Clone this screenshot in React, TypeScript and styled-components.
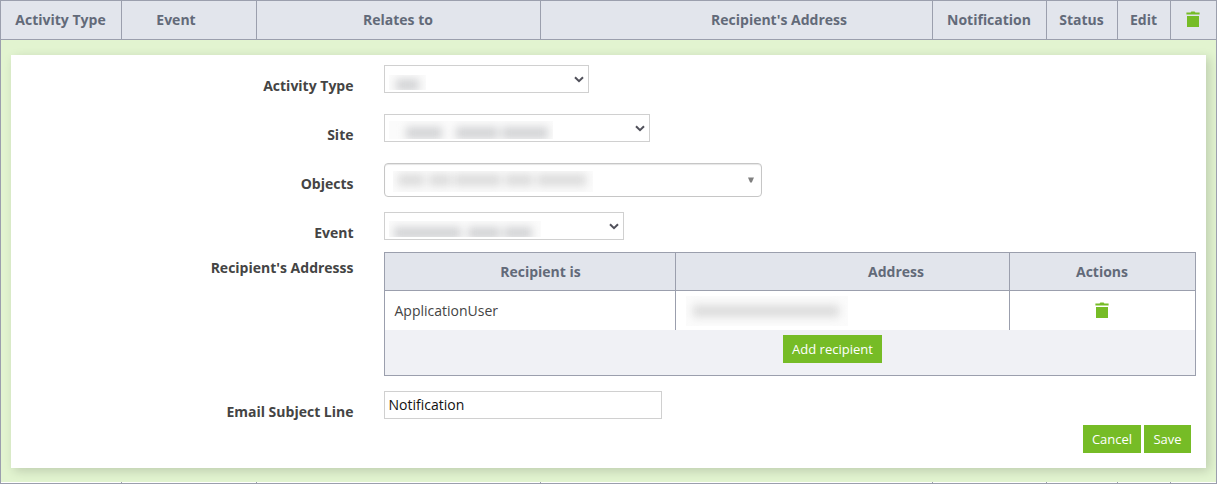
import React from 'react';
import styled, { createGlobalStyle } from 'styled-components';

const LINE = '#9b9fad';
const HEAD = '#e2e5ec';
const GREEN = '#76bc26';

const GlobalStyle = createGlobalStyle`
  * { box-sizing: border-box; }
  body { margin: 0; background: #fff; font-family: "Open Sans", sans-serif; font-size: 14px; color: #444; overflow: hidden; }
`;

const Page = styled.div`
  width: 1217px;
  height: 484px;
  border: 1px solid ${LINE};
  display: flex;
  flex-direction: column;
`;

const ColumnRow = styled.div<{ $height: number; $header?: boolean }>`
  display: grid;
  grid-template-columns: 121px 135px 284px 392px 114px 71px 53px 45px;
  height: ${p => p.$height}px;
  flex: none;
  background: ${p => (p.$header ? HEAD : '#fff')};
  border-bottom: ${p => (p.$header ? `1px solid ${LINE}` : 'none')};
`;

const HeadCell = styled.div<{ $left?: number; $right?: number; $bottom?: number }>`
  display: flex;
  align-items: center;
  justify-content: center;
  padding: 0 ${p => p.$right ?? 0}px ${p => p.$bottom ?? 0}px ${p => p.$left ?? 0}px;
  border-right: 1px solid ${LINE};
  color: #626a79;
  font-weight: 700;
  white-space: nowrap;
  &:last-child { border-right: none; }
`;

const Editor = styled.div`
  flex: 1;
  background: #e2f4d0;
  padding: 15px 10px 14px;
  display: flex;
  overflow: hidden;
`;

const Panel = styled.form`
  flex: 1;
  background: #fff;
  box-shadow: 3px 3px 10px rgba(0, 0, 0, 0.16);
  padding: 10px 10px 0 0;
  display: flex;
  flex-direction: column;
`;

const Field = styled.div<{ $gap: number; $labelTop: number }>`
  display: grid;
  grid-template-columns: 342.5px 1fr;
  column-gap: 30.5px;
  align-items: start;
  margin-bottom: ${p => p.$gap}px;
  > label {
    text-align: right;
    font-weight: 700;
    line-height: 20px;
    height: 0;
    padding-top: ${p => p.$labelTop}px;
  }
`;

const Select = styled.div<{ $width: number }>`
  width: ${p => p.$width}px;
  height: 28px;
  border: 1px solid #d0d0d0;
  display: flex;
  align-items: flex-start;
  justify-content: space-between;
  padding: 0 4px;
  > svg { margin-top: 10px; flex: none; }
`;

const ObjectPicker = styled.div`
  width: 378px;
  height: 34px;
  border: 1px solid #c6c6c6;
  border-radius: 4px;
  box-shadow: inset 0 1px 1px rgba(0, 0, 0, 0.1);
  display: flex;
  align-items: flex-start;
  justify-content: space-between;
  padding: 0 7px 0 8px;
  > svg { margin-top: 13px; }
`;

const Redacted = styled.div<{ $width: number; $height: number; $top: number }>`
  width: ${p => p.$width}px;
  height: ${p => p.$height}px;
  margin-top: ${p => p.$top}px;
  overflow: hidden;
  background: #fbfbfb;
`;

const RedactedWords = styled.div<{ $top: number }>`
  display: flex;
  padding-top: ${p => p.$top}px;
  filter: blur(4px);
`;

const RedactedWord = styled.span<{ $gap: number; $width: number; $tone?: string }>`
  flex: none;
  width: ${p => p.$width}px;
  height: 12px;
  margin-left: ${p => p.$gap}px;
  background: ${p => p.$tone ?? '#d2d3d5'};
`;

const Recipients = styled.div`
  width: 812px;
  height: 124px;
  border: 1px solid ${LINE};
  display: flex;
  flex-direction: column;
`;

const RecipientRow = styled.div<{ $header?: boolean }>`
  display: grid;
  grid-template-columns: 291px 334px 185px;
  height: ${p => (p.$header ? 38 : 39)}px;
  background: ${p => (p.$header ? HEAD : '#fff')};
  border-bottom: ${p => (p.$header ? `1px solid ${LINE}` : 'none')};
`;

const RecipientCell = styled.div<{ $center?: boolean }>`
  border-right: 1px solid ${LINE};
  display: flex;
  align-items: center;
  justify-content: ${p => (p.$center ? 'center' : 'flex-start')};
  padding: ${p => (p.$center ? '0 1px 1px 0' : '0 0 0 9.5px')};
  &:last-child { border-right: none; }
`;

const RecipientFooter = styled.div`
  flex: 1;
  background: #f0f1f5;
  display: flex;
  justify-content: center;
  padding: 5px 0 0 85px;
`;

const Button = styled.button<{ $width: number }>`
  width: ${p => p.$width}px;
  height: 28px;
  padding: 0;
  border: 0;
  background: ${GREEN};
  color: #fff;
  font: 13px/28px "Open Sans", sans-serif;
  white-space: nowrap;
`;

const SubjectInput = styled.input`
  width: 278px;
  height: 28px;
  border: 1px solid #d0d0d0;
  padding: 0 4px 2px 3.5px;
  font: 14px "Open Sans", sans-serif;
  color: #111;
  outline: none;
`;

const Actions = styled.div`
  display: flex;
  justify-content: flex-end;
  gap: 3px;
  padding-right: 5px;
`;

const Trash = () => (
  <svg width="14" height="16" viewBox="0 0 14 16" fill={GREEN}>
    <path d="M.4 1.6H4.6L5.4.4H8.6L9.4 1.6H13.6V3.6H.4ZM1 5H13V16H1Z" />
  </svg>
);

const Chevron = () => (
  <svg width="10" height="7" viewBox="0 0 10 7" fill="none" stroke="#50505a" strokeWidth="2">
    <path d="M1 1.2L5 5.2L9 1.2" />
  </svg>
);

const Triangle = () => (
  <svg width="6" height="6" viewBox="0 0 6 6" fill="#808080">
    <path d="M0 .5H6L3.8 5.5H2.2Z" />
  </svg>
);

type Word = [gap: number, width: number, tone?: string];

const Hidden = ({ width, height, top, inner, words }: { width: number; height: number; top: number; inner: number; words: Word[] }) => (
  <Redacted $width={width} $height={height} $top={top}>
    <RedactedWords $top={inner}>
      {words.map(([gap, w, tone], i) => (
        <RedactedWord key={i} $gap={gap} $width={w} $tone={tone} />
      ))}
    </RedactedWords>
  </Redacted>
);

const columns: [name: string, left: number, right: number][] = [
  ['Activity Type', 0, 1], ['Event', 0, 26], ['Relates to', 0, 1], ["Recipient's Address", 85, 0],
  ['Notification', 0, 1], ['Status', 0, 1], ['Edit', 0, 1],
];

export default function App() {
  return (
    <>
      <GlobalStyle />
      <Page>
        <ColumnRow $height={39} $header>
          {columns.map(([name, left, right]) => (
            <HeadCell key={name} $left={left} $right={right} $bottom={1}>{name}</HeadCell>
          ))}
          <HeadCell $right={1} $bottom={3}><Trash /></HeadCell>
        </ColumnRow>
        <Editor>
          <Panel>
            <Field $gap={21} $labelTop={11}>
              <label>Activity Type</label>
              <Select $width={205}>
                <Hidden width={37} height={15} top={9} inner={4} words={[[7, 23]]} />
                <Chevron />
              </Select>
            </Field>
            <Field $gap={21} $labelTop={11}>
              <label>Site</label>
              <Select $width={266}>
                <Hidden width={164} height={18} top={6} inner={6} words={[[17, 36], [14, 42], [4, 46]]} />
                <Chevron />
              </Select>
            </Field>
            <Field $gap={15} $labelTop={11}>
              <label>Objects</label>
              <ObjectPicker>
                <Hidden width={200} height={21} top={7} inner={3} words={[[5, 26, '#dcdcdc'], [5, 22, '#dcdcdc'], [3, 47, '#dcdcdc'], [4, 28, '#dcdcdc'], [4, 49, '#dcdcdc']]} />
                <Triangle />
              </ObjectPicker>
            </Field>
            <Field $gap={12} $labelTop={11}>
              <label>Event</label>
              <Select $width={240}>
                <Hidden width={152} height={16} top={8} inner={6} words={[[5, 67], [7, 32], [4, 28]]} />
                <Chevron />
              </Select>
            </Field>
            <Field $gap={15} $labelTop={6}>
              <label>Recipient's Addresss</label>
              <Recipients>
                <RecipientRow $header>
                  <HeadCell $left={21}>Recipient is</HeadCell>
                  <HeadCell $left={107}>Address</HeadCell>
                  <HeadCell $right={1}>Actions</HeadCell>
                </RecipientRow>
                <RecipientRow>
                  <RecipientCell>ApplicationUser</RecipientCell>
                  <RecipientCell>
                    <Hidden width={162} height={30} top={0} inner={9} words={[[7, 146, '#dcdcdc']]} />
                  </RecipientCell>
                  <RecipientCell $center><Trash /></RecipientCell>
                </RecipientRow>
                <RecipientFooter><Button type="button" $width={99}>Add recipient</Button></RecipientFooter>
              </Recipients>
            </Field>
            <Field $gap={6} $labelTop={11}>
              <label>Email Subject Line</label>
              <SubjectInput defaultValue="Notification" />
            </Field>
            <Actions>
              <Button type="button" $width={58}>Cancel</Button>
              <Button type="button" $width={47}>Save</Button>
            </Actions>
          </Panel>
        </Editor>
        <ColumnRow $height={1}>
          {Array.from({ length: 8 }, (_, i) => <HeadCell key={i} />)}
        </ColumnRow>
      </Page>
    </>
  );
}
